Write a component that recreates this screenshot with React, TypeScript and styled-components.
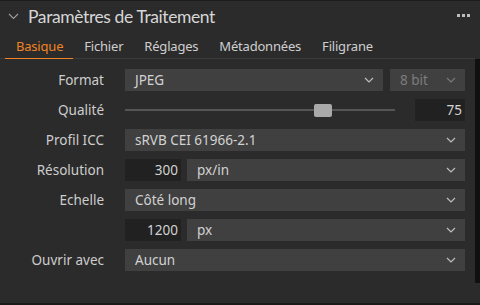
import styled, { createGlobalStyle } from 'styled-components';

const Global = createGlobalStyle`
  html, body {
    margin: 0;
    padding: 0;
    background: #2b2b2b;
  }
  * {
    box-sizing: border-box;
  }
`;

const Panel = styled.div`
  width: 480px;
  height: 305px;
  display: flex;
  flex-direction: column;
  background: #2b2b2b;
  border-top: 1px solid #1c1c1c;
  border-bottom: 2px solid #191919;
  font-family: 'Noto Sans', 'Open Sans', sans-serif;
  color: #cfcfcf;
`;

const Header = styled.div`
  height: 32px;
  display: flex;
  align-items: center;
  padding: 0 10px 2px 8px;
`;

const Title = styled.div`
  flex: 1;
  font-family: Lato, 'Noto Sans', sans-serif;
  font-size: 17.5px;
  letter-spacing: -0.4px;
  color: #d6d6d6;
  margin-left: 9px;
`;

const Dots = styled.div`
  display: flex;
  gap: 2px;
  margin-top: -1px;
  span {
    width: 3px;
    height: 3px;
    background: #bdbdbd;
  }
`;

const Tabs = styled.div`
  height: 26px;
  display: flex;
  padding-left: 5px;
  margin-right: 5px;
  border-bottom: 1px solid #3b3b3b;
`;

const Tab = styled.div<{ $active?: boolean }>`
  padding: 0 10px 0 11px;
  font-size: 13px;
  letter-spacing: -0.2px;
  display: flex;
  align-items: center;
  color: ${(p) => (p.$active ? '#f08324' : '#cfcfcf')};
  border-bottom: 1px solid ${(p) => (p.$active ? '#f08324' : 'transparent')};
  margin-bottom: -1px;
`;

const Body = styled.div`
  height: 224px;
  display: flex;
`;

const Form = styled.div`
  flex: 1;
  display: grid;
  grid-template-columns: 104px 1fr;
  grid-auto-rows: 22px;
  column-gap: 21px;
  row-gap: 8px;
  padding: 10px 10px 0 0;
  align-content: start;
`;

const Track = styled.div`
  width: 5px;
  background: #101010;
`;

const Label = styled.div`
  font-size: 13.5px;
  text-align: right;
  align-self: center;
  color: #cdcdcd;
`;

const Controls = styled.div<{ $gap?: number }>`
  display: flex;
  gap: ${(p) => p.$gap ?? 7}px;
  align-items: center;
`;

const Select = styled.div<{ $disabled?: boolean; $w?: number }>`
  height: 22px;
  flex: ${(p) => (p.$w ? `0 0 ${p.$w}px` : '1')};
  background: #404040;
  display: flex;
  align-items: center;
  padding: 0 9px 0 10px;
  font-size: 13.5px;
  color: ${(p) => (p.$disabled ? '#7c7c7c' : '#d2d2d2')};
  span {
    flex: 1;
  }
  svg {
    opacity: ${(p) => (p.$disabled ? 0.45 : 1)};
  }
`;

const NumBox = styled.div<{ $w: number }>`
  flex: 0 0 ${(p) => p.$w}px;
  height: 22px;
  background: #212121;
  font-size: 13.5px;
  color: #d2d2d2;
  display: flex;
  align-items: center;
  justify-content: flex-end;
  padding-right: 3px;
`;

const Slider = styled.div`
  flex: 0 0 270px;
  height: 22px;
  position: relative;
  display: flex;
  align-items: center;
  margin-right: 13px;
  &::before {
    content: '';
    flex: 1;
    height: 2px;
    background: #555;
  }
`;

const Thumb = styled.div`
  position: absolute;
  top: 5px;
  width: 18px;
  height: 13px;
  border-radius: 2px;
  background: #a9a9a9;
`;

const Chevron = ({ color = '#bdbdbd' }: { color?: string }) => (
  <svg width="10" height="6" viewBox="0 0 10 6">
    <path d="M1 1l4 4 4-4" fill="none" stroke={color} strokeWidth="1.2" />
  </svg>
);

function Dropdown({ value, disabled, w }: { value: string; disabled?: boolean; w?: number }) {
  return (
    <Select $disabled={disabled} $w={w}>
      <span>{value}</span>
      <Chevron />
    </Select>
  );
}

function App() {
  const quality = 75;
  return (
    <>
      <Global />
      <Panel>
        <Header>
          <svg width="11" height="7" viewBox="0 0 11 7">
            <path d="M1 1l4.5 4.5L10 1" fill="none" stroke="#9a9a9a" strokeWidth="1.2" />
          </svg>
          <Title>Paramètres de Traitement</Title>
          <Dots>
            <span />
            <span />
            <span />
          </Dots>
        </Header>
        <Tabs>
          <Tab $active>Basique</Tab>
          <Tab>Fichier</Tab>
          <Tab>Réglages</Tab>
          <Tab>Métadonnées</Tab>
          <Tab>Filigrane</Tab>
        </Tabs>
        <Body>
          <Form>
            <Label>Format</Label>
            <Controls>
              <Dropdown value="JPEG" />
              <Dropdown value="8 bit" disabled w={75} />
            </Controls>

            <Label>Qualité</Label>
            <Controls>
              <Slider>
                <Thumb style={{ left: `${(quality / 100) * 252}px` }} />
              </Slider>
              <NumBox $w={50}>{quality}</NumBox>
            </Controls>

            <Label>Profil ICC</Label>
            <Controls>
              <Dropdown value="sRVB CEI 61966-2.1" />
            </Controls>

            <Label>Résolution</Label>
            <Controls $gap={6}>
              <NumBox $w={56}>300</NumBox>
              <Dropdown value="px/in" />
            </Controls>

            <Label>Echelle</Label>
            <Controls>
              <Dropdown value="Côté long" />
            </Controls>

            <Label />
            <Controls $gap={6}>
              <NumBox $w={56}>1200</NumBox>
              <Dropdown value="px" />
            </Controls>

            <Label>Ouvrir avec</Label>
            <Controls>
              <Dropdown value="Aucun" />
            </Controls>
          </Form>
          <Track />
        </Body>
      </Panel>
    </>
  );
}

export default App;
